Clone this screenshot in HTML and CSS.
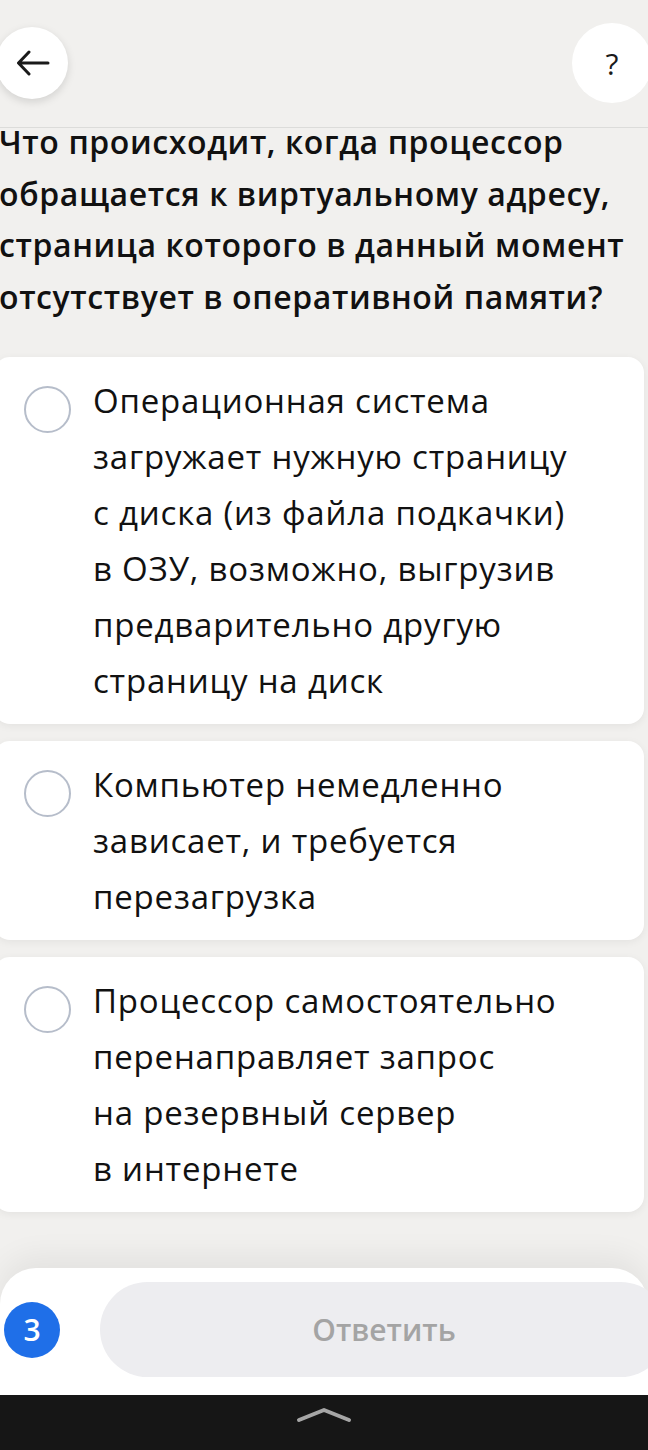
FILE: index.html
```html
<!DOCTYPE html>
<html lang="ru">
<head>
<meta charset="utf-8">
<title>Вопрос</title>
<link rel="stylesheet" href="styles.css">
</head>
<body>
<div class="page">
  <header class="header">
    <button class="round back" aria-label="Назад">
      <svg width="34" height="26" viewBox="0 0 34 26"><path d="M32 13H3M13 2L2.5 13L13 24" fill="none" stroke="#1a1a1a" stroke-width="3" stroke-linecap="round" stroke-linejoin="round"/></svg>
    </button>
    <button class="round help" aria-label="Помощь">?</button>
  </header>

  <h1 class="question">Что происходит, когда процессор<br>обращается к виртуальному адресу,<br>страница которого в данный момент<br>отсутствует в оперативной памяти?</h1>

  <div class="options">
    <label class="option">
      <span class="radio"></span>
      <span class="option-text">Операционная система<br>загружает нужную страницу<br>с диска (из файла подкачки)<br>в ОЗУ, возможно, выгрузив<br>предварительно другую<br>страницу на диск</span>
    </label>
    <label class="option">
      <span class="radio"></span>
      <span class="option-text">Компьютер немедленно<br>зависает, и требуется<br>перезагрузка</span>
    </label>
    <label class="option">
      <span class="radio"></span>
      <span class="option-text">Процессор самостоятельно<br>перенаправляет запрос<br>на резервный сервер<br>в интернете</span>
    </label>
  </div>

  <div class="panel">
    <span class="badge">3</span>
    <button class="answer">Ответить</button>
  </div>

  <nav class="navbar">
    <svg width="56" height="16" viewBox="0 0 56 16"><path d="M3 13L28 3L53 13" fill="none" stroke="#a6a6a6" stroke-width="4" stroke-linecap="round" stroke-linejoin="round"/></svg>
  </nav>
</div>
</body>
</html>
```

FILE: styles.css
```css
* { box-sizing: border-box; }
html, body { margin: 0; padding: 0; }
body {
  background: #f1f0ee;
  font-family: "Open Sans", "Noto Sans", sans-serif;
  color: #111;
  overflow: hidden;
}
.page {
  width: 648px;
  height: 1450px;
  display: flex;
  flex-direction: column;
  overflow: hidden;
}
.header {
  height: 128px;
  border-bottom: 1px solid #dcdcda;
  display: flex;
  justify-content: space-between;
  align-items: flex-start;
  flex-shrink: 0;
}
.round {
  border: none;
  background: #fff;
  border-radius: 50%;
  padding: 0;
  display: flex;
  align-items: center;
  justify-content: center;
  font-family: "Open Sans", sans-serif;
}
.back {
  width: 72px;
  height: 72px;
  margin: 27px 0 0 -4px;
  box-shadow: 0 3px 8px rgba(0,0,0,0.13);
}
.back svg { margin-left: 2px; }
.help {
  width: 80px;
  height: 80px;
  margin: 23px -4px 0 0;
  font-size: 30px;
  font-weight: 400;
  color: #1a1a1a;
}
.question {
  margin: -12px 0 35px -1px;
  font-size: 32px;
  line-height: 51.5px;
  font-weight: 600;
  color: #111;
  letter-spacing: 0.6px;
  white-space: nowrap;
  flex-shrink: 0;
}
.options {
  display: flex;
  flex-direction: column;
  gap: 17px;
  margin: 0 4px 0 -6px;
  flex-shrink: 0;
}
.option {
  background: #fff;
  border-radius: 16px;
  box-shadow: 0 2px 8px rgba(0,0,0,0.06);
  display: flex;
  align-items: flex-start;
  gap: 22px;
  padding: 16px 20px 15px 30px;
}
.radio {
  width: 47px;
  height: 47px;
  border: 2px solid #b6bdca;
  border-radius: 50%;
  margin-top: 13px;
  flex-shrink: 0;
}
.option-text {
  font-size: 33px;
  line-height: 56px;
  color: #111;
  letter-spacing: 0.8px;
  white-space: nowrap;
}
.panel {
  margin-top: 56px;
  height: 127px;
  background: #fff;
  border-radius: 36px 36px 0 0;
  box-shadow: 0 -12px 30px rgba(0,0,0,0.06);
  display: flex;
  align-items: center;
  gap: 40px;
  padding: 0 0 4px 4px;
  flex-shrink: 0;
}
.badge {
  width: 56px;
  height: 56px;
  border-radius: 50%;
  background: #1f6fe8;
  color: #fff;
  font-size: 30px;
  font-weight: 600;
  display: flex;
  align-items: center;
  justify-content: center;
  flex-shrink: 0;
}
.answer {
  width: 568px;
  height: 95px;
  flex-shrink: 0;
  border: none;
  border-radius: 48px;
  background: #ededf0;
  color: #a4a4a4;
  font-family: "Open Sans", sans-serif;
  font-size: 30px;
  font-weight: 600;
}
.navbar {
  height: 55px;
  background: #161616;
  display: flex;
  justify-content: center;
  align-items: flex-start;
  padding-top: 12px;
  flex-shrink: 0;
}
```
